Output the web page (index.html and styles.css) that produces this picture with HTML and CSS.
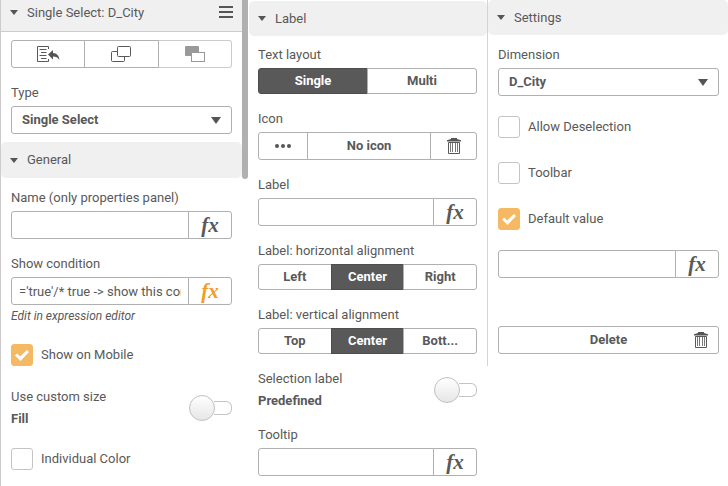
FILE: index.html
```html
<!DOCTYPE html>
<html lang="en">
<head>
<meta charset="utf-8">
<meta name="viewport" content="width=device-width, initial-scale=1">
<title>Single Select properties</title>
<link rel="stylesheet" href="styles.css">
</head>
<body>
<svg class="sprite" aria-hidden="true">
  <symbol id="trash" viewBox="0 0 14 16">
    <path d="M0 3.500V2.200L4 1V0h6v1l4 1.200v1.300z" fill="#555"/>
    <path d="M1.500 4.500h11v11h-11z" fill="#fff" stroke="#595959"/>
    <path d="M3.500 5v9M5.500 5v9M8.500 5v9M10.500 5v9" stroke="#777"/>
  </symbol>
</svg>
<main class="columns">
  <section class="panel panel-main">
    <header class="title-bar">
      <button class="toggle" type="button" aria-expanded="true">Single Select: D_City</button>
      <button class="menu" type="button" aria-label="Menu">
        <svg width="14" height="12" viewBox="0 0 14 12"><path d="M0 1h14M0 6h14M0 11h14" stroke="#555" stroke-width="2"/></svg>
      </button>
    </header>
    <div class="body body-top">
      <div class="group tools">
        <button type="button" aria-label="Apply">
          <svg width="24" height="18" viewBox="0 0 24 18" fill="none" stroke="#595959">
            <path d="M12.500 4V1.500h-11v15h11V14"/>
            <path d="M3.500 4.500h7M5 7.500h5.500M3.500 10.500h7M5 13.500h5.500"/>
            <path d="M12 9.500 17 5v3c4 .3 6 2.500 6.500 7-1.500-2.500-3.500-3.500-6.500-3.500v3z" fill="#555" stroke="none"/>
          </svg>
        </button>
        <button type="button" aria-label="Bring forward">
          <svg width="22" height="18" viewBox="0 0 22 18" fill="#fff" stroke="#595959">
            <rect x="1.500" y="6.500" width="13" height="10" rx="1"/>
            <rect x="7.500" y="1.500" width="13" height="10" rx="1"/>
          </svg>
        </button>
        <button type="button" aria-label="Send backward" class="muted">
          <svg width="22" height="18" viewBox="0 0 22 18">
            <rect x="1" y="1" width="14" height="10" rx="1" fill="#999"/>
            <rect x="7.500" y="7.500" width="13" height="9" fill="#fff" stroke="#999"/>
          </svg>
        </button>
      </div>
      <div class="field">
        <label for="type">Type</label>
        <div class="select"><select id="type"><option>Single Select</option></select></div>
      </div>
    </div>
    <h2 class="section"><button class="toggle" type="button" aria-expanded="true">General</button></h2>
    <div class="body">
      <div class="field">
        <label for="name">Name (only properties panel)</label>
        <div class="group"><input id="name" type="text"><button class="fx" type="button">fx</button></div>
      </div>
      <div class="field">
        <label for="cond">Show condition</label>
        <div class="group"><input id="cond" type="text" value="='true'/* true -&gt; show this condition */"><button class="fx active" type="button">fx</button></div>
        <p class="note">Edit in expression editor</p>
      </div>
      <label class="check"><input type="checkbox" checked>Show on Mobile</label>
      <label class="switch-row">
        <span class="switch-text">Use custom size<strong>Fill</strong></span>
        <input class="switch" type="checkbox" role="switch">
      </label>
      <label class="check"><input type="checkbox">Individual Color</label>
    </div>
  </section>

  <section class="panel panel-label">
    <h2 class="section"><button class="toggle" type="button" aria-expanded="true">Label</button></h2>
    <div class="body">
      <div class="field">
        <span class="caption" id="layout">Text layout</span>
        <div class="group segments" role="group" aria-labelledby="layout">
          <button type="button" aria-pressed="true">Single</button><button type="button" aria-pressed="false">Multi</button>
        </div>
      </div>
      <div class="field">
        <span class="caption" id="icon">Icon</span>
        <div class="group icon-row" role="group" aria-labelledby="icon">
          <button type="button" aria-label="More">
            <svg width="18" height="6" viewBox="0 0 18 6" fill="#555"><circle cx="3" cy="3" r="2"/><circle cx="9" cy="3" r="2"/><circle cx="15" cy="3" r="2"/></svg>
          </button>
          <button type="button">No icon</button>
          <button type="button" aria-label="Remove icon"><svg width="14" height="16"><use href="#trash"/></svg></button>
        </div>
      </div>
      <div class="field">
        <label for="label">Label</label>
        <div class="group"><input id="label" type="text"><button class="fx" type="button">fx</button></div>
      </div>
      <div class="field">
        <span class="caption" id="horizontal">Label: horizontal alignment</span>
        <div class="group segments" role="group" aria-labelledby="horizontal">
          <button type="button" aria-pressed="false">Left</button><button type="button" aria-pressed="true">Center</button><button type="button" aria-pressed="false">Right</button>
        </div>
      </div>
      <div class="field">
        <span class="caption" id="vertical">Label: vertical alignment</span>
        <div class="group segments" role="group" aria-labelledby="vertical">
          <button type="button" aria-pressed="false">Top</button><button type="button" aria-pressed="true">Center</button><button type="button" aria-pressed="false">Bott...</button>
        </div>
      </div>
      <label class="switch-row">
        <span class="switch-text">Selection label<strong>Predefined</strong></span>
        <input class="switch" type="checkbox" role="switch">
      </label>
      <div class="field">
        <label for="tooltip">Tooltip</label>
        <div class="group"><input id="tooltip" type="text"><button class="fx" type="button">fx</button></div>
      </div>
    </div>
  </section>

  <section class="panel panel-settings">
    <h2 class="section"><button class="toggle" type="button" aria-expanded="true">Settings</button></h2>
    <div class="body">
      <div class="field">
        <label for="dimension">Dimension</label>
        <div class="select"><select id="dimension"><option>D_City</option></select></div>
      </div>
      <label class="check"><input type="checkbox">Allow Deselection</label>
      <label class="check"><input type="checkbox">Toolbar</label>
      <label class="check"><input type="checkbox" checked>Default value</label>
      <div class="group"><input type="text" aria-label="Default value expression"><button class="fx" type="button">fx</button></div>
      <button class="delete" type="button"><span>Delete</span><svg width="14" height="16"><use href="#trash"/></svg></button>
    </div>
  </section>
</main>
</body>
</html>
```
FILE: styles.css
```css
* { box-sizing: border-box; }

body {
  margin: 0;
  background: #fff;
  color: #595959;
  font: 13px/18px Roboto, "Liberation Sans", sans-serif;
}

button, input, select { font: inherit; color: inherit; }

button {
  margin: 0;
  padding: 0;
  border: 0;
  background: none;
}

.sprite { position: absolute; width: 0; height: 0; }

.columns {
  display: grid;
  grid-template-columns: minmax(0, 248fr) minmax(0, 240fr) minmax(0, 240fr);
  align-items: start;
}

/* Panels */
.panel-main {
  position: relative;
  min-height: 100vh;
  padding-right: 6px;
  border-left: 1px solid #ccc;
}

/* Scrollbar thumb */
.panel-main::after {
  content: "";
  position: absolute;
  top: 0;
  right: 0;
  width: 6px;
  height: 179px;
  border-radius: 0 0 3px 3px;
  background: #b0b0b0;
}

.panel-label { padding: 1px 1px 0; }
.panel-settings { min-height: 366px; border-left: 1px solid #d4d4d4; margin-left: -1px; }

.title-bar {
  display: flex;
  justify-content: space-between;
  height: 32px;
  padding: 0 9px;
  border-bottom: 1px solid #ccc;
  background: #f0f0f0;
}

.title-bar .toggle { height: 25px; }
.menu { height: 24px; display: flex; align-items: center; }

.section {
  margin: 0;
  padding: 0 9px;
  border-radius: 5px;
  background: #f0f0f0;
  font: inherit;
}

.toggle {
  display: flex;
  align-items: center;
  gap: 9px;
  height: 35px;
}

.panel-main .section .toggle { height: 36px; }

.toggle::before {
  content: "";
  border: 4px solid transparent;
  border-top: 5px solid #555;
  border-bottom: 0;
}

/* Panel bodies */
.body {
  display: flex;
  flex-direction: column;
  gap: 16px;
  padding: 11px 10px 10px;
}

.body-top { padding: 8px 10px; }
.panel-label .body { padding: 10px 10px 10px 9px; }
.panel-settings .body { gap: 24px; padding-right: 9px; }

.field { display: flex; flex-direction: column; gap: 4px; }
.note { margin: -2px 0 3px; font-style: italic; font-size: 12px; }

.group { display: flex; }

.group > * {
  height: 28px;
  border: 1px solid #b0b0b0;
  background: #fff;
}

.group > * + * { margin-left: -1px; }
.group > :first-child { border-radius: 3px 0 0 3px; }
.group > :last-child { border-radius: 0 3px 3px 0; }

.group button {
  display: flex;
  align-items: center;
  justify-content: center;
  font-weight: bold;
}

.group input { flex: 1; min-width: 0; padding: 0 7px; outline: 0; }

.group .fx {
  flex: 0 0 44px;
  font: italic bold 21px/24px "Liberation Serif", serif;
}

.group .fx.active { color: #f39c1f; }

.tools button, .segments button { flex: 1 1 0; }
.tools .muted { border-color: #ccc; border-left-color: #b0b0b0; }
.segments button { height: 26px; }
.segments [aria-pressed="true"] { border-color: #4d4d4d; background: #595959; color: #fff; }

.icon-row button { flex: 0 0 50px; }
.icon-row button:nth-child(2) { flex: 1; }
.icon-row button:last-child { flex-basis: 47px; }

.select { position: relative; }

.select select {
  appearance: none;
  display: block;
  width: 100%;
  height: 28px;
  padding: 0 24px 0 10px;
  border: 1px solid #b0b0b0;
  border-radius: 3px;
  background: #fff;
  font-weight: bold;
}

.select::after {
  content: "";
  position: absolute;
  top: 11px;
  right: 11px;
  border: 5px solid transparent;
  border-top: 7px solid #555;
  border-bottom: 0;
  pointer-events: none;
}

/* Tick boxes */
.check { display: flex; align-items: center; gap: 8px; }

.check input {
  appearance: none;
  width: 22px;
  height: 22px;
  margin: 0;
  border: 1px solid #c4c4c4;
  border-radius: 3px;
  background: #fff;
}

.check input:checked { border-color: #f5b863; background: #f5b863; }

.check input:checked::before {
  content: "";
  display: block;
  width: 14px;
  height: 11px;
  margin: 5px 3px;
  background: #fff;
  clip-path: polygon(0 50%, 15% 32%, 37% 58%, 85% 0, 100% 18%, 39% 100%);
}

/* Switches */
.switch-row { display: flex; justify-content: space-between; align-items: center; }
.switch-text { display: flex; flex-direction: column; gap: 4px; }

.switch {
  appearance: none;
  display: flex;
  align-items: center;
  width: 43px;
  height: 24px;
  margin: 0;
}

.switch::before {
  content: "";
  flex: 0 0 24px;
  height: 24px;
  border: 1px solid #c0c0c0;
  border-radius: 50%;
  background: linear-gradient(#fff, #e6e6e6);
}

.switch::after {
  content: "";
  flex: 1;
  height: 12px;
  margin-left: -1px;
  border: 1px solid #c4c4c4;
  border-left: 0;
  border-radius: 0 6px 6px 0;
}

.panel-main .switch-row { margin: 6px 0 4px; }
.panel-settings .field { margin-bottom: -4px; }
.panel-settings .group { margin-top: -4px; }

.delete {
  display: grid;
  grid-template-columns: 14px 1fr 14px;
  align-items: center;
  height: 28px;
  margin-top: 24px;
  padding: 0 10px;
  border: 1px solid #b0b0b0;
  border-radius: 3px;
  font-weight: bold;
}

.delete span { grid-column: 2; }
```
